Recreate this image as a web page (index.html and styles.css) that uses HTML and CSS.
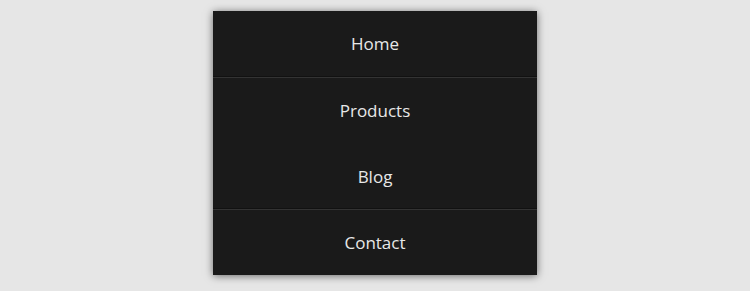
FILE: index.html
```html
<!DOCTYPE html>
<html>
<head>
<meta charset="utf-8">
<link rel="stylesheet" href="styles.css">
</head>
<body>
<nav class="menu">
  <a class="item" href="#">Home</a>
  <a class="item sep" href="#">Products</a>
  <a class="item low" href="#">Blog</a>
  <a class="item sep" href="#">Contact</a>
</nav>
</body>
</html>
```
FILE: styles.css
```css
html, body {
  margin: 0;
  padding: 0;
  background: #e6e6e6;
  height: 100%;
}
body {
  padding-top: 11px;
  box-sizing: border-box;
}
.menu {
  width: 324px;
  margin: 0 auto;
  background: #1a1a1a;
  display: flex;
  flex-direction: column;
  box-shadow: 0 1px 8px rgba(0, 0, 0, 0.55);
}
.item {
  height: 65px;
  display: flex;
  align-items: center;
  justify-content: center;
  font-family: "Open Sans", "Noto Sans", sans-serif;
  font-size: 17px;
  color: #e8e8e8;
  text-decoration: none;
}
.item.low {
  padding-top: 2px;
  box-sizing: border-box;
}
.item.sep {
  border-top: 1px solid #111;
  box-shadow: inset 0 1px 0 #333;
  height: 66px;
}
```
